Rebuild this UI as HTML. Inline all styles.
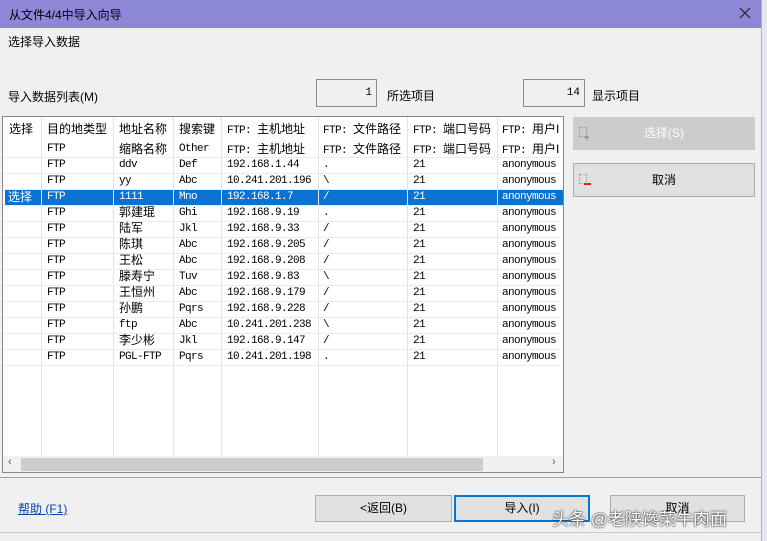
<!DOCTYPE html>
<html><head><meta charset="utf-8"><style>
*{margin:0;padding:0;box-sizing:border-box}
body{width:767px;height:541px;background:#f0f0f0;font-family:"Liberation Sans","Noto Sans CJK SC",sans-serif;font-size:12px;color:#000;position:relative;overflow:hidden}
.a{position:absolute;white-space:nowrap}
#title{left:0;top:0;width:761px;height:28px;background:#8c88d6;}
#rstrip{left:761px;top:0;width:6px;height:541px;background:#e6e6ee;border-left:1px solid #b0b0c8}
.box{background:#f0f0f0;border:1px solid #8a8a8a;text-align:right;padding-right:4px;line-height:26px;font-family:"Liberation Mono",monospace;font-size:11px}
#tbl{left:2px;top:116px;width:562px;height:357px;background:#fff;border:1px solid #828790;overflow:hidden}
.vl{position:absolute;top:0;width:1px;height:340px;background:#e3e3e3}
.hl{position:absolute;left:0;width:562px;height:1px;background:#ebebeb}
.c{position:absolute;white-space:nowrap;font-family:"Liberation Mono","Noto Sans CJK SC",monospace;font-size:11px;letter-spacing:-0.6px;line-height:17px}
.h{font-family:"Liberation Sans","Noto Sans CJK SC",sans-serif;font-size:12px;letter-spacing:0}
.btn{position:absolute;background:#e1e1e1;border:1px solid #adadad;text-align:center;font-size:12px}
</style></head><body>
<div class="a" id="title"><span class="a" style="left:9px;top:6px;font-size:12px">从文件4/4中导入向导</span>
<svg class="a" style="left:739px;top:7px" width="12" height="12"><path d="M1 1L11 11M11 1L1 11" stroke="#222" stroke-width="1.2"/></svg></div>
<div class="a" id="rstrip"></div>
<div class="a" style="left:8px;top:33px">选择导入数据</div>
<div class="a" style="left:8px;top:88px">导入数据列表(M)</div>
<div class="a box" style="left:316px;top:79px;width:61px;height:28px">1</div>
<div class="a" style="left:387px;top:87px">所选项目</div>
<div class="a box" style="left:523px;top:79px;width:62px;height:28px">14</div>
<div class="a" style="left:592px;top:87px">显示项目</div>

<div class="a" id="tbl">
<div class="a" style="left:2px;top:72px;width:560px;height:16px;background:#0a72d0"></div>
<div class="vl" style="left:38px"></div><div class="vl" style="left:110px"></div><div class="vl" style="left:170px"></div><div class="vl" style="left:218px"></div><div class="vl" style="left:315px"></div><div class="vl" style="left:404px"></div><div class="vl" style="left:494px"></div>
<div class="hl" style="top:40px"></div><div class="hl" style="top:56px"></div><div class="hl" style="top:72px"></div><div class="hl" style="top:88px"></div><div class="hl" style="top:104px"></div><div class="hl" style="top:120px"></div><div class="hl" style="top:136px"></div><div class="hl" style="top:152px"></div><div class="hl" style="top:168px"></div><div class="hl" style="top:184px"></div><div class="hl" style="top:200px"></div><div class="hl" style="top:216px"></div><div class="hl" style="top:232px"></div><div class="hl" style="top:248px"></div>
<div class="c h" style="left:6px;top:4px">选择</div>
<div class="c h" style="left:44px;top:4px">目的地类型</div>
<div class="c h" style="left:116px;top:4px">地址名称</div>
<div class="c h" style="left:176px;top:4px">搜索键</div>
<div class="c" style="left:224px;top:4px">FTP: <span class="h">主机地址</span></div>
<div class="c" style="left:320px;top:4px">FTP: <span class="h">文件路径</span></div>
<div class="c" style="left:410px;top:4px">FTP: <span class="h">端口号码</span></div>
<div class="c" style="left:499px;top:4px">FTP: <span class="h">用户I</span></div>
<div class="c" style="left:44px;top:24px">FTP</div>
<div class="c h" style="left:116px;top:24px">缩略名称</div>
<div class="c" style="left:176px;top:24px">Other</div>
<div class="c" style="left:224px;top:24px">FTP: <span class="h">主机地址</span></div>
<div class="c" style="left:320px;top:24px">FTP: <span class="h">文件路径</span></div>
<div class="c" style="left:410px;top:24px">FTP: <span class="h">端口号码</span></div>
<div class="c" style="left:499px;top:24px">FTP: <span class="h">用户I</span></div>
<div id="rows"></div>
<div class="a" style="left:0;top:339px;width:560px;height:17px;background:#f0f0f0"></div>
<div class="a" style="left:18px;top:341px;width:462px;height:13px;background:#cdcdcd"></div>
<div class="a" style="left:5px;top:339px;font-size:11px;color:#555">&lsaquo;</div>
<div class="a" style="left:549px;top:339px;font-size:11px;color:#555">&rsaquo;</div>
</div>
<script>
var d=[["FTP","ddv","Def","192.168.1.44","."],["FTP","yy","Abc","10.241.201.196","\\"],["FTP","1111","Mno","192.168.1.7","/"],["FTP","郭建琨","Ghi","192.168.9.19","."],["FTP","陆军","Jkl","192.168.9.33","/"],["FTP","陈琪","Abc","192.168.9.205","/"],["FTP","王松","Abc","192.168.9.208","/"],["FTP","滕寿宁","Tuv","192.168.9.83","\\"],["FTP","王恒州","Abc","192.168.9.179","/"],["FTP","孙鹏","Pqrs","192.168.9.228","/"],["FTP","ftp","Abc","10.241.201.238","\\"],["FTP","李少彬","Jkl","192.168.9.147","/"],["FTP","PGL-FTP","Pqrs","10.241.201.198","."]];
var h="",xs=[44,116,176,224,320];
d.forEach(function(r,i){var t=40+i*16,col=i==2?"#fff":"#000";
if(i==2)h+='<div class="c h" style="left:5px;top:'+t+'px;color:#fff">选择</div>';
r.forEach(function(v,j){var hz=/[\u4e00-\u9fff]/.test(v);h+='<div class="c'+(hz?' h':'')+'" style="left:'+xs[j]+'px;top:'+(hz?t-1:t)+'px;color:'+col+'">'+v+'</div>'});
h+='<div class="c" style="left:410px;top:'+t+'px;color:'+col+'">21</div><div class="c" style="left:499px;top:'+t+'px;color:'+col+'">anonymous</div>';});
document.getElementById("rows").innerHTML=h;
</script>
<div class="btn" style="left:573px;top:117px;width:182px;height:33px;background:#cccccc;border-color:#cccccc;color:#fff;line-height:31px">选择(S)</div>
<div class="a" style="left:579px;top:127px;width:8px;height:10px;border:1px dotted #999"></div>
<div class="a" style="left:584px;top:133px;color:#777;font-size:10px">+</div>
<div class="btn" style="left:573px;top:163px;width:182px;height:34px;line-height:32px">取消</div>
<div class="a" style="left:579px;top:174px;width:8px;height:10px;border:1px dotted #999"></div>
<div class="a" style="left:584px;top:183px;width:7px;height:2px;background:#d22"></div>
<div class="a" style="left:0;top:477px;width:761px;height:1px;background:#a0a0a0"></div>
<div class="a" style="left:0;top:532px;width:761px;height:1px;background:#c8c8d8"></div>
<div class="a" style="left:18px;top:500px;color:#0645ad;text-decoration:underline">帮助 (F1)</div>
<div class="btn" style="left:315px;top:495px;width:137px;height:27px;line-height:25px">&lt;返回(B)</div>
<div class="btn" style="left:454px;top:495px;width:136px;height:27px;line-height:23px;border:2px solid #0078d7">导入(I)</div>
<div class="btn" style="left:610px;top:495px;width:135px;height:27px;line-height:25px">取消</div>
<div class="a" style="left:552px;top:505px;font-size:17px;color:#fff;text-shadow:0 0 2px #333,0 0 1px #000">头条 @老陕馋菜牛肉面</div>
</body></html>
